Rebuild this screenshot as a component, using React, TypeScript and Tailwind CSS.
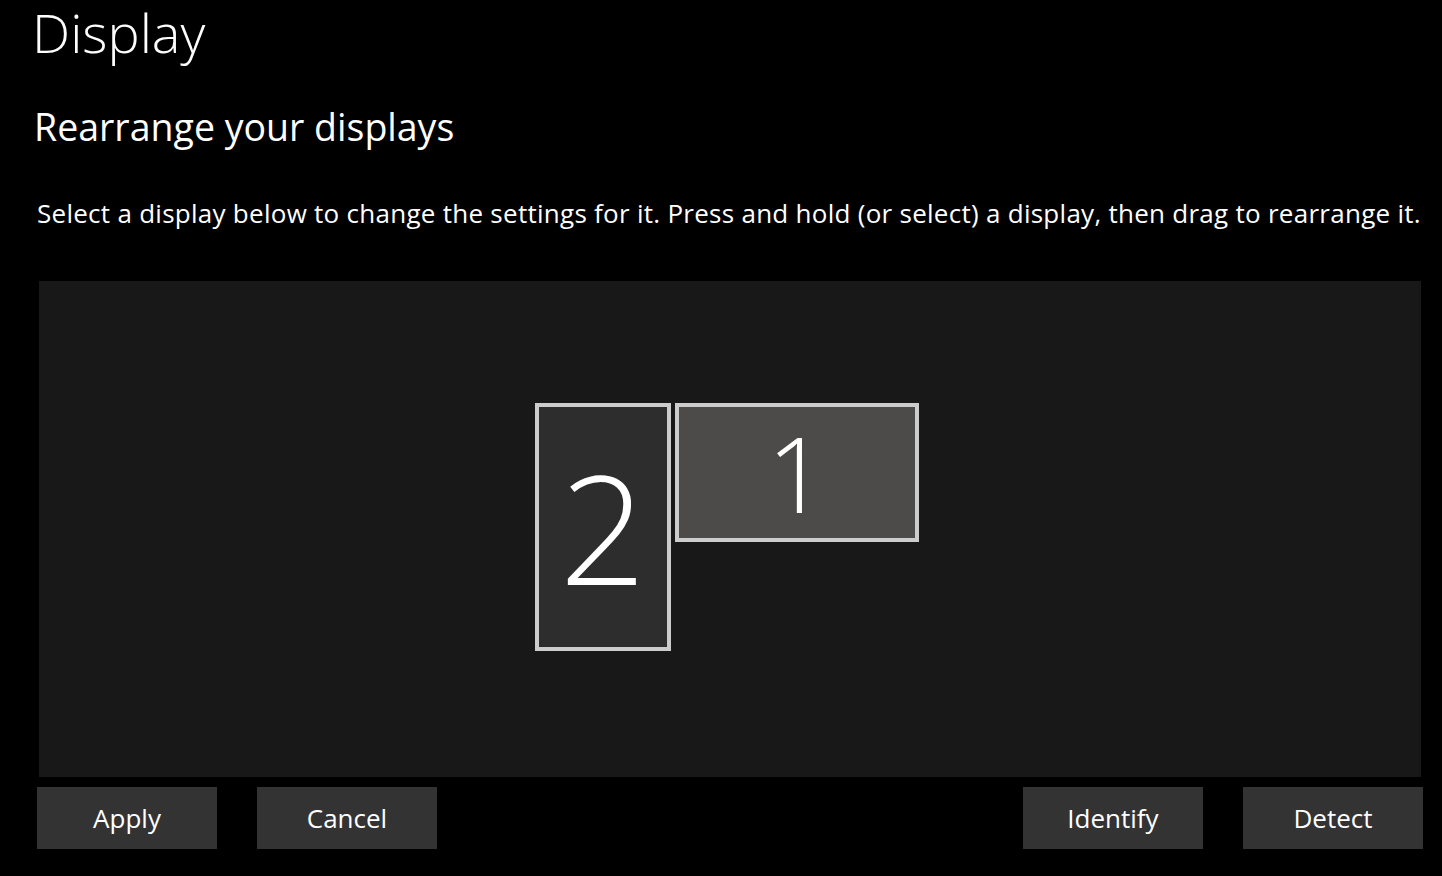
import React from "react";

const buttons = ["Apply", "Cancel"] as const;
const rightButtons = ["Identify", "Detect"] as const;

function Btn({ label }: { label: string }) {
  return (
    <button className="flex h-[62px] w-[180px] items-center justify-center bg-[#333333] text-[26px] leading-[34px] text-white">
      {label}
    </button>
  );
}

export default function App() {
  return (
    <div className="h-[876px] w-[1442px] overflow-hidden bg-black font-['Open_Sans',sans-serif] text-white">
      <h1 className="pl-[32px] text-[54px] font-light leading-[64px]">Display</h1>
      <h2 className="pl-[34px] pt-[39px] text-[37.5px] font-normal leading-[48px]">Rearrange your displays</h2>
      <p className="mt-[45px] pl-[37px] text-[26px] leading-[34px] tracking-[0.27px]">
        Select a display below to change the settings for it. Press and hold (or select) a display, then drag to rearrange it.
      </p>

      <div className="relative ml-[39px] mt-[51px] h-[496px] w-[1382px] bg-[#181818]">
        <div className="absolute left-[496px] top-[122px] flex h-[248px] w-[136px] items-center justify-center border-[4px] border-[#cccccc] bg-[#2d2d2d] text-[152px] font-light leading-none">
          2
        </div>
        <div className="absolute left-[636px] top-[122px] flex h-[139px] w-[244px] items-center justify-center border-[4px] border-[#cccccc] bg-[#4c4b49] text-[105px] font-light leading-none">
          1
        </div>
      </div>

      <div className="mt-[10px] flex w-[1423px] justify-between pl-[37px]">
        <div className="flex gap-[40px]">
          {buttons.map((b) => (
            <Btn key={b} label={b} />
          ))}
        </div>
        <div className="flex gap-[40px]">
          {rightButtons.map((b) => (
            <Btn key={b} label={b} />
          ))}
        </div>
      </div>
    </div>
  );
}
